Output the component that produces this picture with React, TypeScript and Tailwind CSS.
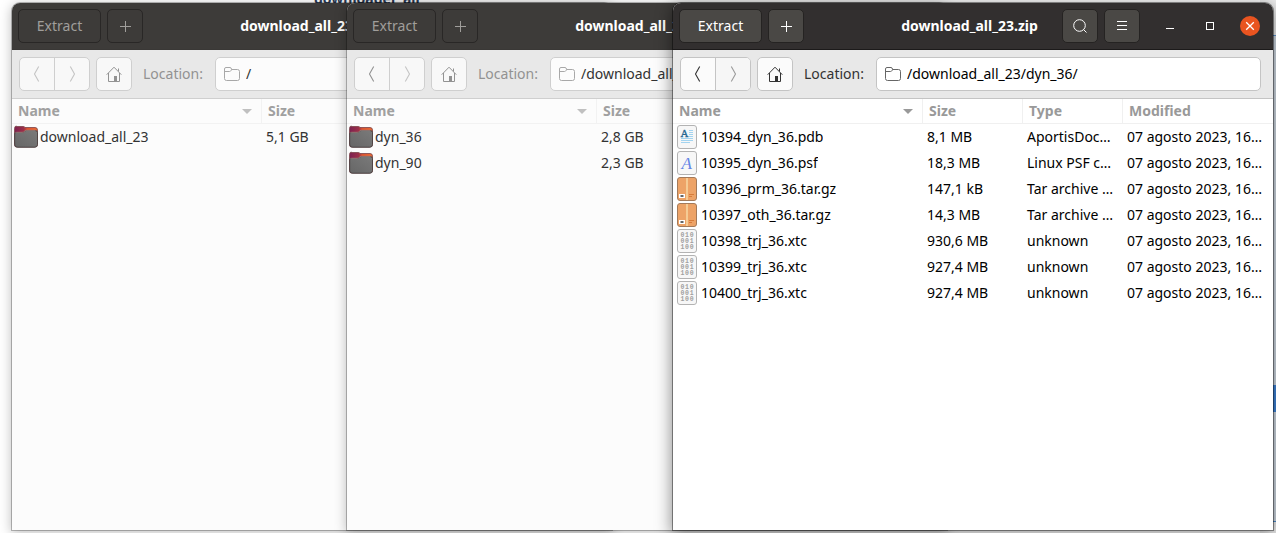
import React from "react";

type FileKind = "folder" | "doc" | "font" | "archive" | "binary";
type Row = { kind: FileKind; name: string; size: string; type?: string; modified?: string };

const DATE = "07 agosto 2023, 16…";

const ROOT_ROWS: Row[] = [{ kind: "folder", name: "download_all_23", size: "5,1 GB" }];

const FOLDER_ROWS: Row[] = [
  { kind: "folder", name: "dyn_36", size: "2,8 GB" },
  { kind: "folder", name: "dyn_90", size: "2,3 GB" },
];

const FILE_ROWS: Row[] = [
  { kind: "doc", name: "10394_dyn_36.pdb", size: "8,1 MB", type: "AportisDoc…", modified: DATE },
  { kind: "font", name: "10395_dyn_36.psf", size: "18,3 MB", type: "Linux PSF c…", modified: DATE },
  { kind: "archive", name: "10396_prm_36.tar.gz", size: "147,1 kB", type: "Tar archive …", modified: DATE },
  { kind: "archive", name: "10397_oth_36.tar.gz", size: "14,3 MB", type: "Tar archive …", modified: DATE },
  { kind: "binary", name: "10398_trj_36.xtc", size: "930,6 MB", type: "unknown", modified: DATE },
  { kind: "binary", name: "10399_trj_36.xtc", size: "927,4 MB", type: "unknown", modified: DATE },
  { kind: "binary", name: "10400_trj_36.xtc", size: "927,4 MB", type: "unknown", modified: DATE },
];

function FolderIcon() {
  return (
    <svg width="24" height="24" viewBox="0 0 24 24" className="block shrink-0">
      <defs>
        <linearGradient id="folderBack" x1="0" x2="1" y1="0" y2="0">
          <stop offset="0" stopColor="#7c2150" />
          <stop offset="0.4" stopColor="#9c2f48" />
          <stop offset="0.55" stopColor="#d9532f" />
          <stop offset="1" stopColor="#ec6a34" />
        </linearGradient>
        <linearGradient id="folderFront" x1="0" x2="1" y1="1" y2="0">
          <stop offset="0" stopColor="#666666" />
          <stop offset="1" stopColor="#7a7a7a" />
        </linearGradient>
      </defs>
      <path d="M2.500 1.500h7q1 0 1.500 1h10q2.500 0 2.500 2.500v14.500q0 2.500-2.500 2.500h-18.500q-2 0-2-2.500v-16q0-2.500 2-2.500z" fill="url(#folderBack)" stroke="#7a4248" strokeWidth="0.800" />
      <path d="M.7 8.500q0-1 1.500-1h6q1.500 0 2.300-1t2-1h8.500q2.500 0 2.500 2v12q0 2.700-2.700 2.700h-17.500q-2.600 0-2.600-2.700z" fill="url(#folderFront)" stroke="#4b4242" strokeWidth="0.900" />
      <path d="M1.500 7.800q0-.5 1-.5h5.700q1.500 0 2.300-1t2-1h9" fill="none" stroke="#a98a86" strokeWidth="0.800" />
    </svg>
  );
}

function Paper({ children }: { children: React.ReactNode }) {
  return (
    <svg width="20" height="24" viewBox="0 0 20 24" className="block shrink-0">
      <rect x="0.500" y="0.500" width="19" height="23" rx="2.500" fill="#f7f7f7" stroke="#b3b3b3" />
      {children}
    </svg>
  );
}

function FileIcon({ kind }: { kind: FileKind }) {
  if (kind === "folder") return <FolderIcon />;
  if (kind === "doc")
    return (
      <Paper>
        <text x="3.500" y="12" fontSize="11" fontFamily="Liberation Serif, serif" fill="#24658f" stroke="#24658f" strokeWidth="0.300">A</text>
        <path d="M12 5.500h4M12 7.500h4M12 9.500h4M12 11.500h4M4 13.500h12M4 15.500h12M4 17.500h9" stroke="#a3d4f0" />
      </Paper>
    );
  if (kind === "font")
    return (
      <Paper>
        <text x="4.500" y="18" fontSize="17" fontFamily="Liberation Serif, serif" fontStyle="italic" fill="#6384e6">A</text>
      </Paper>
    );
  if (kind === "archive")
    return (
      <svg width="20" height="24" viewBox="0 0 20 24" className="block shrink-0">
        <rect x="0.500" y="0.500" width="19" height="23" rx="2.500" fill="#eda367" stroke="#a37a5a" />
        <path d="M10 1v22" stroke="#f5cb94" strokeWidth="2" />
        <rect x="2" y="17" width="6" height="4" fill="#fff" />
        <path d="M3.500 19h3" stroke="#666" strokeWidth="2" />
        <path d="M12 17.500h5M12 19.500h3" stroke="#d77c3a" />
      </svg>
    );
  return (
    <Paper>
      <g fontSize="6.500" fontFamily="Liberation Mono, monospace" fontWeight="bold" fill="#a0a0a0">
        {["010", "001", "100"].map((line, row) =>
          line.split("").map((digit, col) => (
            <text key={`${row}${col}`} x={3.5 + col * 4.6} y={8 + row * 6}>{digit}</text>
          ))
        )}
      </g>
    </Paper>
  );
}

function HomeIcon() {
  return (
    <svg width="16" height="16" viewBox="0 0 16 16" fill="none" stroke="currentColor">
      <path d="M.7 8.700 8 1.200l7.300 7.500M2.500 7v8.500h11V7M12.500 5.500v-3" />
      <path d="M8 10h3v5H8z" fill="currentColor" stroke="none" />
    </svg>
  );
}

function Chevron({ flip }: { flip?: boolean }) {
  return (
    <svg width="16" height="16" viewBox="0 0 16 16" fill="none" stroke="currentColor" strokeWidth="1.100" className={flip ? "rotate-180" : ""}>
      <path d="M9.700.5 5.500 8l4.200 7.500" />
    </svg>
  );
}

type WindowProps = {
  id: string;
  path: string;
  rows: Row[];
  active?: boolean;
  canGoBack?: boolean;
  place: string;
};

function ArchiveWindow({ id, path, rows, active, canGoBack, place }: WindowProps) {
  const barButton = active
    ? "border-[#252322] bg-[#4a4845] text-white"
    : "border-[#292726] bg-[#3d3b39] text-[#a09e9b]";
  const toolButton = active ? "border-[#c4c4c4] bg-[#fbfbfb]" : "border-[#cfcfcf] bg-[#f8f8f8]";
  const strong = active ? "text-[#333333]" : "text-[#929292]";
  const weak = active ? "text-[#9a9a9a]" : "text-[#c4c4c4]";
  const rule = active ? "border-[#f0f0f0]" : "border-[#f2f2f2]";

  return (
    <section
      aria-label={path}
      className={`absolute top-[3px] bottom-[3px] flex flex-col overflow-hidden rounded-t-lg ${place} ${
        active
          ? "bg-white text-black shadow-[0_0_0_1px_rgba(0,0,0,0.4),0_3px_16px_2px_rgba(0,0,0,0.42)]"
          : "bg-[#fcfcfc] text-[#333333] shadow-[0_0_0_1px_rgba(0,0,0,0.25),0_2px_12px_1px_rgba(0,0,0,0.25)]"
      }`}
    >
      <header
        className={`grid h-[47px] shrink-0 grid-cols-[1fr_auto_1fr] items-center border-b pr-[13px] pl-[6px] ${
          active ? "border-[#1c1a1a] bg-[#322f2f]" : "border-[#3a3836] bg-[#3d3b39]"
        }`}
      >
        <div className="flex gap-[6px]">
          <button className={`h-[34px] w-[83px] rounded-[5px] border ${barButton}`}>Extract</button>
          <button aria-label="Add files" className={`flex h-[34px] w-9 items-center justify-center rounded-[5px] border ${barButton}`}>
            <svg width="16" height="16" viewBox="0 0 16 16" stroke="currentColor">
              <path d="M8.500 3v11M3 8.500h11" />
            </svg>
          </button>
        </div>
        <h1 className="font-bold whitespace-nowrap text-white">download_all_23.zip</h1>
        <div className="flex items-center justify-end gap-5 text-white">
          <div className="flex gap-[6px]">
            <button aria-label="Search" className={`flex h-[34px] w-9 items-center justify-center rounded-[5px] border ${barButton}`}>
              <svg width="16" height="16" viewBox="0 0 16 16" fill="none" stroke="currentColor">
                <circle cx="7.500" cy="7.500" r="5.800" />
                <path d="m11.500 11.500 3 3" />
              </svg>
            </button>
            <button aria-label="Menu" className={`flex h-[34px] w-9 items-center justify-center rounded-[5px] border ${barButton}`}>
              <svg width="16" height="16" viewBox="0 0 16 16" stroke="currentColor">
                <path d="M3 3.500h10M3 7.500h10M3 11.500h10" />
              </svg>
            </button>
          </div>
          <button aria-label="Minimize" className="size-5">
            <svg width="20" height="20" viewBox="0 0 20 20" stroke="currentColor">
              <path d="M6 12.500h8" />
            </svg>
          </button>
          <button aria-label="Maximize" className="size-5">
            <svg width="20" height="20" viewBox="0 0 20 20" fill="none" stroke="currentColor">
              <rect x="6.500" y="6.500" width="7" height="7" />
            </svg>
          </button>
          <button aria-label="Close" className="size-5 rounded-full bg-[#e95420]">
            <svg width="20" height="20" viewBox="0 0 20 20" stroke="currentColor" strokeWidth="1.300">
              <path d="m6.200 6.200 7.600 7.600M13.800 6.200l-7.600 7.600" />
            </svg>
          </button>
        </div>
      </header>

      <div
        className={`flex h-[49px] shrink-0 items-center border-b pr-3 pl-[7px] ${
          active ? "border-[#c4c4c4] bg-[#e8e8e8]" : "border-[#cfcfcf] bg-[#e8e8e8]"
        }`}
      >
        <div className={`flex h-[34px] overflow-hidden rounded-[5px] border ${toolButton}`}>
          <button aria-label="Back" className={`flex w-[35px] items-center justify-center border-r ${active ? "border-[#c4c4c4]" : "border-[#cfcfcf]"} ${canGoBack ? strong : weak}`}>
            <Chevron />
          </button>
          <button aria-label="Forward" className={`flex w-[34px] items-center justify-center ${active ? "bg-[#f6f6f6]" : ""} ${weak}`}>
            <Chevron flip />
          </button>
        </div>
        <button aria-label="Home" className={`ml-[6px] flex h-[34px] w-9 items-center justify-center rounded-[5px] border ${toolButton} ${strong}`}>
          <HomeIcon />
        </button>
        <label htmlFor={id} className={`ml-[11px] w-[72px] shrink-0 ${strong}`}>
          Location:
        </label>
        <div className={`flex h-[34px] min-w-0 flex-1 items-center gap-[6px] rounded-[5px] border pl-2 ${active ? "border-[#c4c4c4] bg-white" : "border-[#cfcfcf] bg-[#fcfcfc]"}`}>
          <svg width="16" height="16" viewBox="0 0 16 16" fill="none" stroke="currentColor" className={`shrink-0 ${active ? "text-[#666666]" : "text-[#a8a8a8]"}`}>
            <path d="M.5 3q0-1.500 1.500-1.500h4q1.500 0 1.500 2h6q2 0 2 2v7q0 2-2 2H2.500q-2 0-2-2zM.5 5.500h5q1 0 1.500-1t1-1" />
          </svg>
          <input id={id} defaultValue={path} className="min-w-0 flex-1 bg-transparent outline-none" />
        </div>
      </div>

      <table className="w-full table-fixed border-separate border-spacing-0 text-left">
        <colgroup>
          <col className="w-[250px]" />
          <col className="w-[100px]" />
          <col className="w-[100px]" />
          <col />
        </colgroup>
        <thead>
          <tr className={`h-[25px] font-bold ${active ? "text-[#999999]" : "text-[#a0a0a0]"}`}>
            <th className={`border-r border-b py-0 pr-[9px] pl-[6px] ${rule}`}>
              <div className="flex items-center justify-between">
                Name
                <svg width="10" height="5" viewBox="0 0 10 5" fill={active ? "#999999" : "#c0c0c0"}>
                  <path d="M0 0h10L5 5z" />
                </svg>
              </div>
            </th>
            <th className={`border-r border-b py-0 pl-[6px] ${rule}`}>Size</th>
            <th className={`border-r border-b py-0 pl-[6px] ${rule}`}>Type</th>
            <th className={`border-b py-0 pl-[6px] ${rule}`}>Modified</th>
          </tr>
        </thead>
        <tbody>
          {rows.map((row) => (
            <tr key={row.name} className="h-[26px]">
              <td className="p-0">
                <div className={`flex items-center ${row.kind === "folder" ? "gap-[2px] pl-[2px]" : "gap-1 pl-1"}`}>
                  <FileIcon kind={row.kind} />
                  <span className="truncate">{row.name}</span>
                </div>
              </td>
              <td className="py-0 pl-1 whitespace-nowrap">{row.size}</td>
              <td className="py-0 pl-1 whitespace-nowrap">{row.type}</td>
              <td className="py-0 pl-1 whitespace-nowrap">{row.modified}</td>
            </tr>
          ))}
        </tbody>
      </table>
    </section>
  );
}

export default function App() {
  return (
    <main className="relative h-screen overflow-hidden bg-white font-['Noto_Sans',sans-serif] text-[14px] leading-5">
      <div className="absolute -top-[11px] left-[314px] font-bold text-[#2b3a55]">downloader_all</div>
      <div className="absolute inset-y-0 right-0 flex w-4 flex-col bg-[#d3dce6]">
        <div className="h-[36px] border-b border-[#5f97d0] bg-[#f0f0f0]" />
        <div className="h-[349px]" />
        <div className="h-[27px] bg-[#3f86dc]" />
        <div className="h-[110px] border-b border-[#4f8fd0]" />
        <div className="flex-1 bg-[#f0f0f0]" />
      </div>
      <ArchiveWindow id="location-root" path="/" rows={ROOT_ROWS} place="left-[12px] w-[600px]" />
      <ArchiveWindow id="location-folder" path="/download_all_23/" rows={FOLDER_ROWS} canGoBack place="left-[347px] w-[600px]" />
      <ArchiveWindow id="location-files" path="/download_all_23/dyn_36/" rows={FILE_ROWS} active canGoBack place="left-[673px] right-[3px]" />
    </main>
  );
}
